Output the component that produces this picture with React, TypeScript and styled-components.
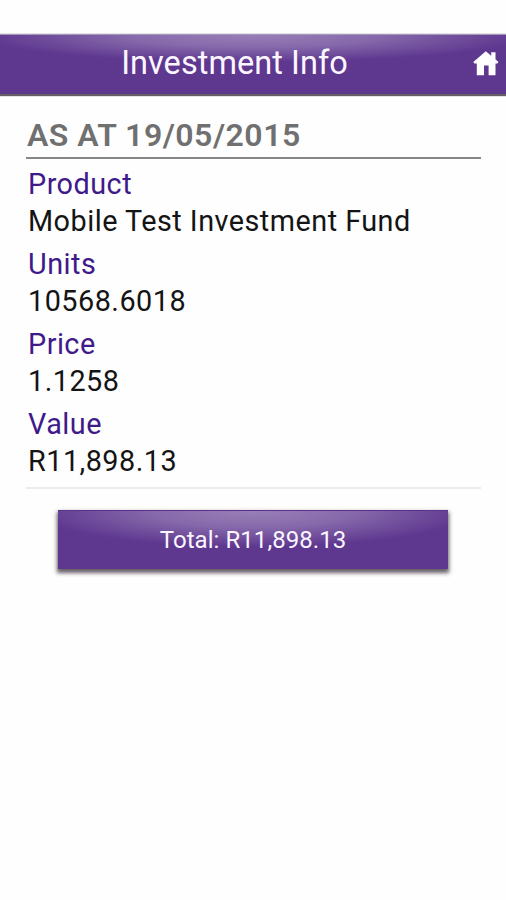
import React from "react";
import styled, { createGlobalStyle, css } from "styled-components";

const GlobalStyle = createGlobalStyle`
  *, *::before, *::after { box-sizing: border-box; }
  body {
    margin: 0;
    background: #fefefe;
    font-family: Roboto, "Liberation Sans", sans-serif;
  }
`;

const glossyPurple = (width: number, height: number) => css`
  background:
    radial-gradient(ellipse ${width}% ${height}% at 50% 0, rgba(255, 255, 255, 0.36) 0%, rgba(255, 255, 255, 0.25) 45%, rgba(255, 255, 255, 0.07) 85%, rgba(255, 255, 255, 0) 100%),
    #5e378f;
  color: #fbf6ff;
`;

const Screen = styled.div`
  display: flex;
  flex-direction: column;
  min-height: 900px;
  padding-top: 34px;
  overflow: hidden;
`;

const Header = styled.header`
  ${glossyPurple(54, 46)}
  display: grid;
  grid-template-columns: 38px 1fr 38px;
  align-items: center;
  height: 60px;
  border-top: 1px solid #a796bd;
  box-shadow: 0 1px 1px 1px rgba(50, 40, 50, 0.75);
`;

const Title = styled.h1`
  grid-column: 2;
  margin: 0 0 4px;
  padding-right: 37px;
  text-align: center;
  font-size: 32.5px;
  line-height: 38px;
  font-weight: 400;
  letter-spacing: 0.05px;
  white-space: nowrap;
`;

const HomeButton = styled.button`
  display: flex;
  padding: 0;
  margin: 0 0 2px 5px;
  border: 0;
  background: none;
  color: #fff;
`;

const Details = styled.main`
  margin: 20px 25px 0 26px;
  border-bottom: 2px solid #ebebeb;
  height: 375px;
`;

const AsAt = styled.h2`
  margin: 0;
  padding: 3px 0 0 1px;
  height: 45px;
  border-bottom: 2px solid #868686;
  font-size: 32px;
  line-height: 37px;
  font-weight: 600;
  letter-spacing: 0.5px;
  color: #707070;
`;

const Fields = styled.dl`
  margin: 0;
  padding: 7px 0 0 2px;
  font-size: 28.8px;
  letter-spacing: 0.48px;
  white-space: nowrap;
`;

const Field = styled.div`
  height: 80px;
`;

const Label = styled.dt`
  line-height: 37px;
  color: #40198a;
`;

const Value = styled.dd`
  margin: 0;
  line-height: 37px;
  color: #141414;
`;

const Total = styled.div`
  ${glossyPurple(56, 62)}
  display: flex;
  justify-content: center;
  align-items: center;
  width: 390px;
  height: 59px;
  margin: 21px 0 0 58px;
  font-size: 24px;
  letter-spacing: 0.05px;
  border-top: 1px solid #5a328c;
  box-shadow: 0 3px 4px 1px rgba(40, 25, 40, 0.7);
`;

const fields = [
  ["Product", "Mobile Test Investment Fund"],
  ["Units", "10568.6018"],
  ["Price", "1.1258"],
  ["Value", "R11,898.13"],
];

export default function App() {
  return (
    <Screen>
      <GlobalStyle />
      <Header>
        <Title>Investment Info</Title>
        <HomeButton aria-label="Home">
          <svg width="26" height="25" viewBox="0 0 26 25" fill="currentColor" aria-hidden="true">
            <path d="M12.8 0.2 L18.2 4.7 V1.3 H22.5 V8.3 L25.4 11 L24.4 12.5 H22.5 V24.2 H15.6 V14.6 H11 V24.2 H3.8 V12.5 H1.5 L0.3 11 Z" />
          </svg>
        </HomeButton>
      </Header>
      <Details>
        <AsAt>AS AT 19/05/2015</AsAt>
        <Fields>
          {fields.map(([label, value]) => (
            <Field key={label}>
              <Label>{label}</Label>
              <Value>{value}</Value>
            </Field>
          ))}
        </Fields>
      </Details>
      <Total>Total: R11,898.13</Total>
    </Screen>
  );
}
